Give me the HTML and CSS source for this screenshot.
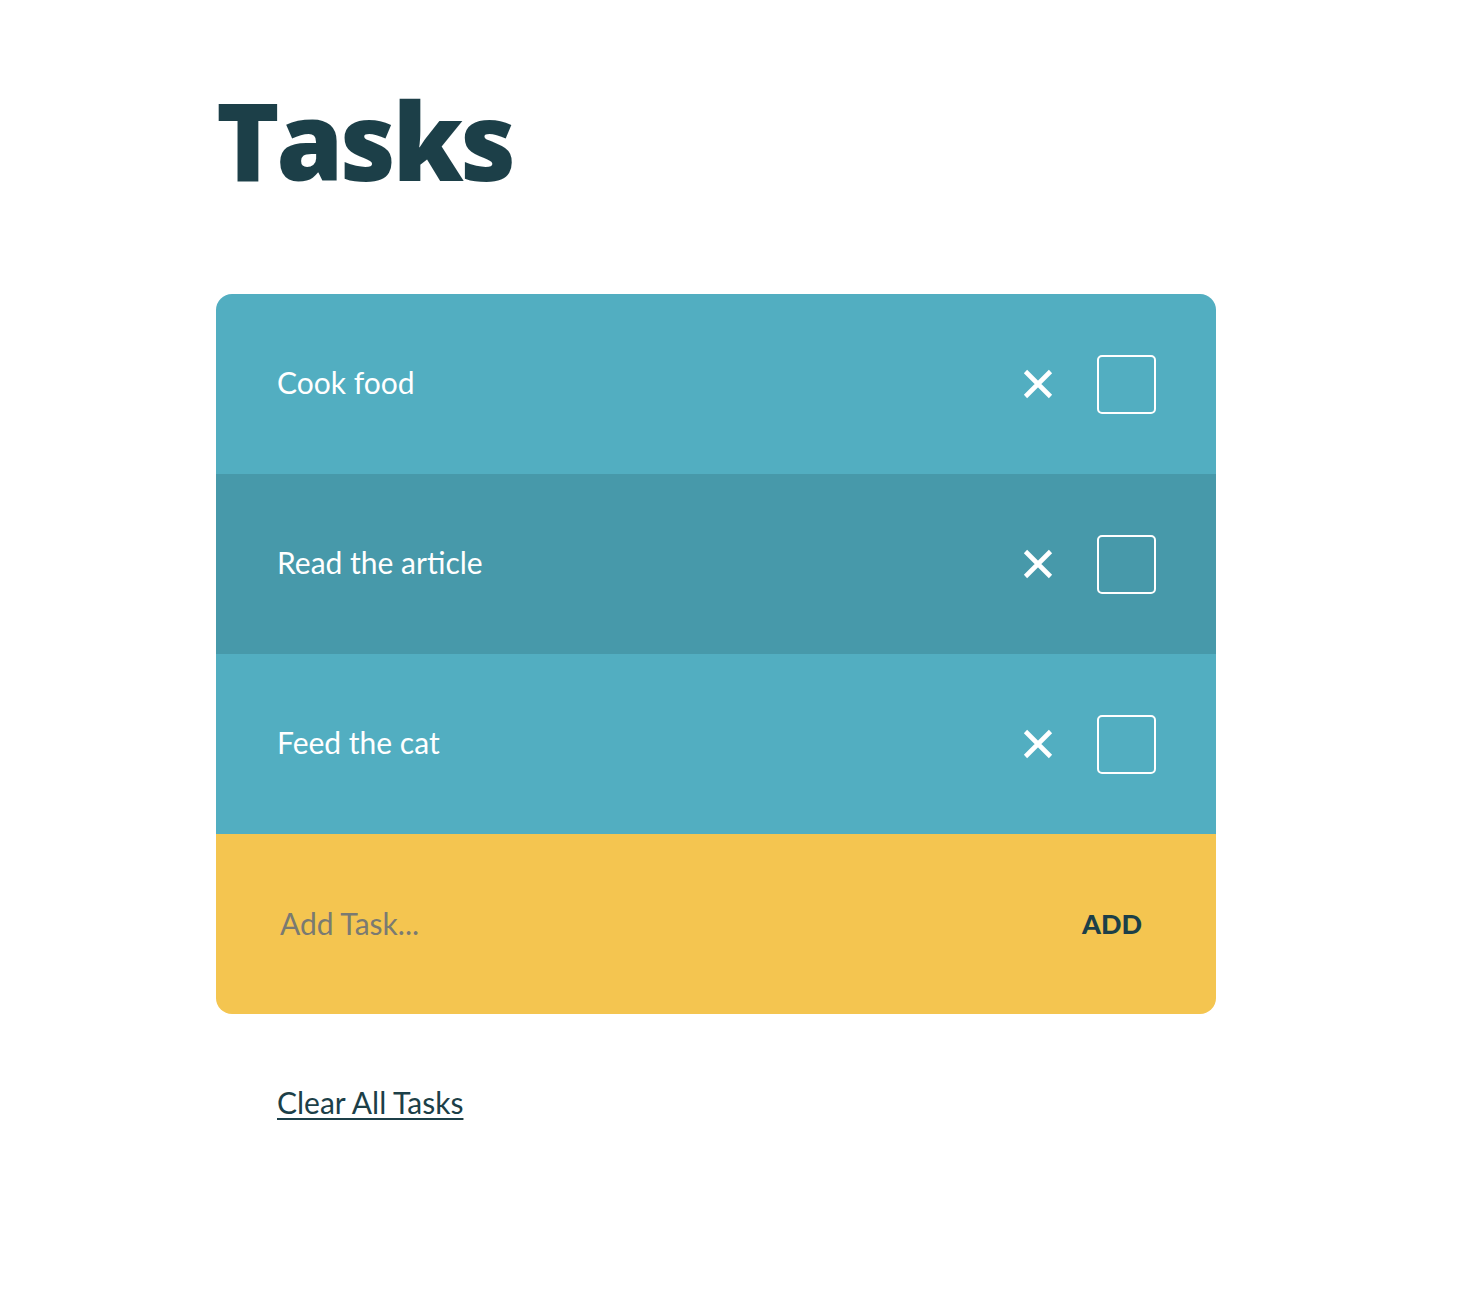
FILE: index.html
```html
<!DOCTYPE html>
<html lang="en">
<head>
<meta charset="utf-8">
<title>Tasks</title>
<link rel="stylesheet" href="styles.css">
</head>
<body>
<main class="app">
  <h1 class="title">Tasks</h1>
  <section class="card">
    <ul class="list">
      <li class="task">
        <span class="task-name">Cook food</span>
        <div class="task-actions">
          <button class="remove" aria-label="Remove"><svg viewBox="0 0 30 30" width="30" height="30"><path d="M2.5 2.5L27.5 27.5M27.5 2.5L2.5 27.5" stroke="#fff" stroke-width="4.6" stroke-linecap="butt"/></svg></button>
          <span class="check"></span>
        </div>
      </li>
      <li class="task task-dark">
        <span class="task-name">Read the article</span>
        <div class="task-actions">
          <button class="remove" aria-label="Remove"><svg viewBox="0 0 30 30" width="30" height="30"><path d="M2.5 2.5L27.5 27.5M27.5 2.5L2.5 27.5" stroke="#fff" stroke-width="4.6" stroke-linecap="butt"/></svg></button>
          <span class="check"></span>
        </div>
      </li>
      <li class="task">
        <span class="task-name">Feed the cat</span>
        <div class="task-actions">
          <button class="remove" aria-label="Remove"><svg viewBox="0 0 30 30" width="30" height="30"><path d="M2.5 2.5L27.5 27.5M27.5 2.5L2.5 27.5" stroke="#fff" stroke-width="4.6" stroke-linecap="butt"/></svg></button>
          <span class="check"></span>
        </div>
      </li>
    </ul>
    <form class="add-form">
      <input class="add-input" type="text" placeholder="Add Task...">
      <button class="add-btn" type="button">ADD</button>
    </form>
  </section>
  <a class="clear" href="#">Clear All Tasks</a>
</main>
</body>
</html>
```
FILE: styles.css
```css
* { box-sizing: border-box; }
html, body { margin: 0; padding: 0; background: #fff; }
body { font-family: "Lato", "Open Sans", sans-serif; color: #1c3f48; }
.app {
  padding: 76px 0 0 216px;
  width: 1216px;
  display: flex;
  flex-direction: column;
  align-items: flex-start;
}
.title {
  margin: 0;
  font-family: "Open Sans", "Lato", sans-serif;
  font-size: 108px;
  font-weight: 800;
  line-height: 128px;
  letter-spacing: -3.5px;
  color: #1c3f48;
}
.card {
  margin-top: 90px;
  width: 1000px;
  border-radius: 16px;
  overflow: hidden;
}
.list { list-style: none; margin: 0; padding: 0; }
.task {
  height: 180px;
  padding: 0 60px 0 61px;
  display: flex;
  align-items: center;
  justify-content: space-between;
  background: #52aec1;
  color: #fff;
}
.task-dark { background: #4799aa; }
.task-name { font-size: 30px; font-weight: 400; margin-bottom: 4px; }
.task-actions { display: flex; align-items: center; gap: 44px; }
.remove {
  background: none; border: 0; padding: 0; width: 30px; height: 30px;
  display: flex; cursor: pointer;
}
.check {
  width: 59px; height: 59px;
  border: 2px solid #fff;
  border-radius: 5px;
}
.add-form {
  height: 180px;
  background: #f4c550;
  display: flex;
  align-items: center;
  justify-content: space-between;
  padding: 0 74px 0 64px;
}
.add-input {
  background: transparent; border: 0; outline: 0;
  font-family: inherit; font-size: 30px; color: #333;
  width: 600px; padding: 0; margin-bottom: 2px;
}
.add-input::placeholder { color: #7a7a72; }
.add-btn {
  background: none; border: 0; padding: 0; margin-bottom: 2px;
  font-family: inherit; font-size: 27px; font-weight: 900;
  color: #1c3f48; letter-spacing: 0;
}
.clear {
  margin: 70px 0 0 61px;
  font-size: 30px;
  color: #1c3f48;
  text-decoration: underline;
  text-decoration-thickness: 2px;
  text-underline-offset: 4px;
}
```
